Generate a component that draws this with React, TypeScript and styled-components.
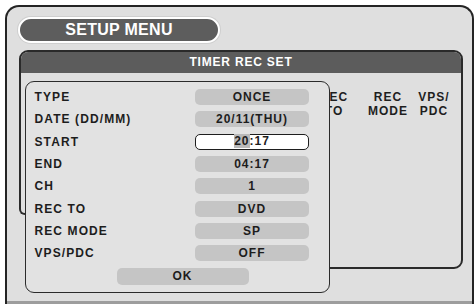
import React from 'react'
import styled, { createGlobalStyle } from 'styled-components'

const GlobalStyle = createGlobalStyle`
  html, body {
    margin: 0;
    padding: 0;
    background: #ffffff;
    overflow: hidden;
  }
  body {
    font-family: "Liberation Sans", Arial, sans-serif;
  }
`

const Frame = styled.div`
  position: relative;
  box-sizing: border-box;
  width: 469px;
  margin: 5px 0 0 5px;
  padding: 10px 0 0 0;
  border: 2px solid #242424;
  border-bottom: none;
  border-radius: 14px 14px 0 0;
  background: #dfdfdf;
`

const MenuPill = styled.div`
  box-sizing: border-box;
  width: 202px;
  height: 26px;
  margin-left: 11px;
  border: 2.5px solid #ffffff;
  border-radius: 13px;
  background: #5d5d5d;
  box-shadow: 0 0 0 1px #cfcfcf;
  color: #ffffff;
  font-size: 16px;
  font-weight: bold;
  line-height: 21px;
  letter-spacing: 0.3px;
  text-align: center;
`

const Panel = styled.div`
  position: relative;
  box-sizing: border-box;
  width: 444px;
  height: 219px;
  margin: 7px 0 0 12px;
  border: 2px solid #2a2a2a;
  border-radius: 9px;
  background: #dfdfdf;

  &::after {
    content: '';
    position: absolute;
    left: -2px;
    top: 155px;
    bottom: -2px;
    width: 6px;
    background: #dfdfdf;
  }

  &::before {
    content: '';
    position: absolute;
    z-index: 1;
    left: -2px;
    top: 150px;
    width: 6px;
    height: 11px;
    border-left: 2px solid #2a2a2a;
    border-bottom: 2px solid #2a2a2a;
    border-bottom-left-radius: 6px;
  }
`

const PanelHeader = styled.div`
  height: 21px;
  border-radius: 7px 7px 0 0;
  background: #5c5c5c;
  color: #ffffff;
  font-size: 12px;
  font-weight: bold;
  line-height: 21px;
  letter-spacing: 0.8px;
  text-align: center;
`

const ColumnHeads = styled.div`
  display: flex;
  justify-content: flex-end;
  padding: 17px 11px 0 0;
`

const ColHead = styled.div<{ $w: number }>`
  width: ${p => p.$w}px;
  color: #1e1e1e;
  font-size: 12px;
  font-weight: bold;
  line-height: 14px;
  letter-spacing: 1px;
  text-align: center;
`

const Footer = styled.div`
  height: 10px;
  margin-top: 32px;
  background: #9d9d9d;
`

const Dialog = styled.div`
  position: absolute;
  z-index: 2;
  left: 18px;
  top: 74px;
  box-sizing: border-box;
  width: 305px;
  height: 212px;
  padding: 4px 20px 0 8.5px;
  border: 1.5px solid #2b2b2b;
  border-radius: 9px;
  background: #e2e2e2;
`

const Row = styled.div`
  display: flex;
  align-items: center;
  height: 22.3px;
`

const Label = styled.div`
  flex: 1;
  color: #1d1d1d;
  font-size: 12px;
  font-weight: bold;
  letter-spacing: 1.1px;
`

const Field = styled.div<{ $active?: boolean }>`
  box-sizing: border-box;
  width: 114px;
  height: 16px;
  border: ${p => (p.$active ? '1.5px solid #1e1e1e' : 'none')};
  border-radius: 5px;
  background: ${p => (p.$active ? '#ffffff' : '#c5c5c5')};
  color: #1d1d1d;
  font-size: 12px;
  font-weight: bold;
  line-height: ${p => (p.$active ? '13px' : '16px')};
  letter-spacing: 1px;
  text-align: center;
`

const Cursor = styled.span`
  background: #b9b9b9;
`

const OkButton = styled.div`
  width: 132px;
  height: 17px;
  margin: 4px 0 0 82px;
  border-radius: 5px;
  background: #c5c5c5;
  color: #1d1d1d;
  font-size: 12px;
  font-weight: bold;
  line-height: 17px;
  letter-spacing: 1px;
  text-align: center;
`

const rows: { label: string; value: React.ReactNode; active?: boolean }[] = [
  { label: 'TYPE', value: 'ONCE' },
  { label: 'DATE (DD/MM)', value: '20/11(THU)' },
  { label: 'START', value: <><Cursor>20</Cursor>:17</>, active: true },
  { label: 'END', value: '04:17' },
  { label: 'CH', value: '1' },
  { label: 'REC TO', value: 'DVD' },
  { label: 'REC MODE', value: 'SP' },
  { label: 'VPS/PDC', value: 'OFF' },
]

const App = () => {
  return (
    <>
      <GlobalStyle />
      <Frame>
        <MenuPill>SETUP MENU</MenuPill>
        <Panel>
          <PanelHeader>TIMER REC SET</PanelHeader>
          <ColumnHeads>
            <ColHead $w={48}>REC<br />TO</ColHead>
            <ColHead $w={60}>REC<br />MODE</ColHead>
            <ColHead $w={32}>VPS/<br />PDC</ColHead>
          </ColumnHeads>
        </Panel>
        <Footer />
        <Dialog>
          {rows.map(r => (
            <Row key={r.label}>
              <Label>{r.label}</Label>
              <Field $active={r.active}>{r.value}</Field>
            </Row>
          ))}
          <OkButton>OK</OkButton>
        </Dialog>
      </Frame>
    </>
  )
}

export default App
